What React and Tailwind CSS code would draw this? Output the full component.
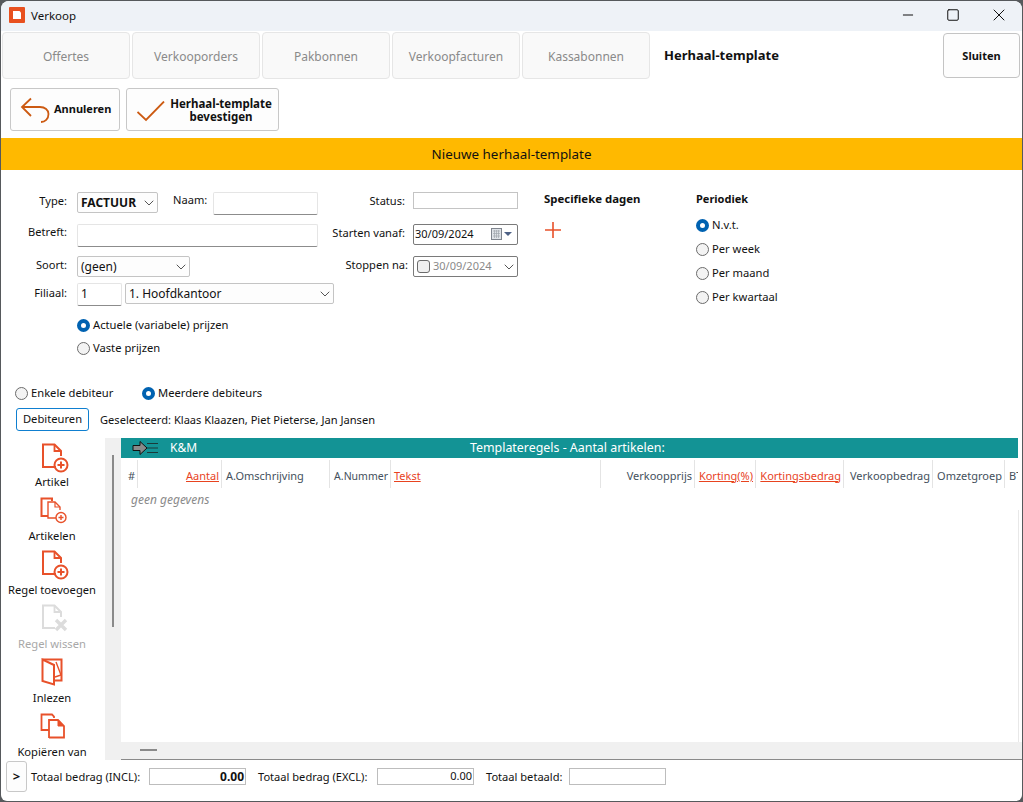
import React from "react";
import { ChevronDown, Minus, Square, X } from "lucide-react";

const font = "font-['Noto_Sans','Open_Sans',sans-serif]";

// Absolute-positioned label, right edge or left edge given through className
const Label = ({ className, children }) => (
  <div className={`absolute text-[11.1px] leading-[16px] text-[#111] whitespace-nowrap ${className}`}>
    {children}
  </div>
);

const Radio = ({ checked, className, children }) => (
  <div className={`absolute flex items-center whitespace-nowrap text-[11.2px] leading-[16px] text-[#111] ${className}`}>
    {checked ? (
      <span className="w-[13px] h-[13px] rounded-full border-[4px] border-[#0062b1] bg-white mr-[3px]" />
    ) : (
      <span className="w-[13px] h-[13px] rounded-full border border-[#6b6b6b] bg-[#f3f3f3] mr-[3px]" />
    )}
    {children}
  </div>
);

const Select = ({ className, children }) => (
  <div className={`absolute flex items-center justify-between pl-[3px] bg-[#fdfdfd] border border-[#c4c4c4] rounded-[2px] text-[12px] text-[#111] ${className}`}>
    <span>{children}</span>
    <ChevronDown size={16} strokeWidth={1.5} className="text-[#555]" />
  </div>
);

const Input = ({ className, children }) => (
  <div className={`absolute bg-white border border-[#e5e5e5] border-b-[#8c8c8c] rounded-[2px] px-[3px] text-[12px] text-[#111] ${className}`}>
    {children}
  </div>
);

const Tab = ({ left, children }) => (
  <div
    className="absolute top-[32px] w-[128px] h-[47px] flex items-center justify-center pt-[2px] bg-[#f9f9f9] border border-[#e6e6e6] rounded-[4px] text-[12px] text-[#8a8a8a]"
    style={{ left }}
  >
    {children}
  </div>
);

const Head = ({ left, width, red, children }) => (
  <div
    className={`absolute top-[460px] h-[28px] flex items-center justify-end pt-[4px] pr-[2px] border-r border-[#e4e4e4] text-[11px] whitespace-nowrap overflow-hidden ${
      red ? "text-[#e8431f] [&>span]:underline" : "text-[#44505c]"
    }`}
    style={{ left, width }}
  >
    <span>{children}</span>
  </div>
);

const DocPlus = ({ className, color = "#e8512a" }) => (
  <svg className={`absolute ${className}`} width="28" height="30" viewBox="0 0 28 30" fill="none" stroke={color}>
    <path d="M15 24H2V1.5H13.5L20 8V13" strokeWidth="2" />
    <path d="M13.5 1.5V8H20" strokeWidth="1.8" />
    <circle cx="20" cy="22" r="6.5" strokeWidth="2" />
    <path d="M20 18.5V25.5M16.5 22H23.5" strokeWidth="2" />
  </svg>
);

const Tool = ({ top, muted, children }) => (
  <div
    className={`absolute left-0 w-[104px] text-center text-[11.2px] leading-[16px] whitespace-nowrap ${muted ? "text-[#a8a8a8]" : "text-[#111]"}`}
    style={{ top }}
  >
    {children}
  </div>
);

export default function App() {
  return (
    <div className={`relative w-[1023px] h-[802px] overflow-hidden bg-[#56595c] ${font}`}>
      <div className="absolute left-[1px] top-[1px] w-[1021px] h-[800px] bg-white rounded-t-[8px] rounded-b-[6px] overflow-hidden">
      </div>
      <div className="absolute left-0 top-0 w-[1023px] h-[802px]">
        {/* Title bar */}
        <div className="absolute left-[1px] top-[1px] w-[1021px] h-[30px] bg-[#eef2f7] rounded-t-[8px]" />
        <svg className="absolute left-[9px] top-[7px]" width="16" height="16" viewBox="0 0 16 16">
          <rect width="16" height="16" rx="1" fill="#e8501f" />
          <path d="M4 4H10.5L12 5.5V12H4Z" fill="#fff" />
        </svg>
        <div className="absolute left-[31px] top-[7px] text-[11.5px] leading-[18px] text-[#111]">Verkoop</div>
        <Minus size={16} strokeWidth={1.5} className="absolute left-[900px] top-[7px] text-[#111]" />
        <Square size={14} strokeWidth={1.7} className="absolute left-[946px] top-[8px] text-[#111]" />
        <X size={20} strokeWidth={1.2} className="absolute left-[989px] top-[5px] text-[#111]" />

        {/* Tabs */}
        <Tab left={2}>Offertes</Tab>
        <Tab left={132}>Verkooporders</Tab>
        <Tab left={262}>Pakbonnen</Tab>
        <Tab left={392}>Verkoopfacturen</Tab>
        <Tab left={522}>Kassabonnen</Tab>
        <div className="absolute left-[664px] top-[46px] text-[13px] leading-[18px] font-bold text-[#111]">Herhaal-template</div>
        <div className="absolute left-[943px] top-[33px] w-[77px] h-[45px] flex items-center justify-center pt-[2px] bg-[#fdfdfd] border border-[#c4c4c4] rounded-[4px] text-[11px] font-bold text-[#111]">
          Sluiten
        </div>

        {/* Action buttons */}
        <div className="absolute left-[10px] top-[88px] w-[110px] h-[43px] bg-[#fdfdfd] border border-[#c8c8c8] rounded-[3px]">
          <svg className="absolute left-[9px] top-[8px]" width="30" height="26" viewBox="0 0 30 26" fill="none" stroke="#cc5a12" strokeWidth="1.8">
            <path d="M11 1.5L2 10L11 19" />
            <path d="M2 10H20C25 10 28.5 13 28.5 17C28.5 22 25 25 21 25" />
          </svg>
          <div className="absolute left-[43px] top-[12px] text-[11px] leading-[16px] font-bold text-[#111]">Annuleren</div>
        </div>
        <div className="absolute left-[126px] top-[88px] w-[153px] h-[43px] bg-[#fdfdfd] border border-[#c8c8c8] rounded-[3px]">
          <svg className="absolute left-[10px] top-[12px]" width="30" height="24" viewBox="0 0 30 24" fill="none" stroke="#cc5a12" strokeWidth="1.8">
            <path d="M0.5 11L9 19L27 0.5" />
          </svg>
          <div className="absolute left-[38px] top-[8px] w-[112px] text-center text-[11.5px] leading-[13px] font-bold text-[#111]">
            Herhaal-template
            <br />
            bevestigen
          </div>
        </div>

        {/* Banner */}
        <div className="absolute left-[1px] top-[138px] w-[1021px] h-[32px] flex items-center justify-center bg-[#ffb900] text-[13.4px] text-[#111]">
          Nieuwe herhaal-template
        </div>

        {/* Form, left */}
        <Label className="right-[956px] top-[193px]">Type:</Label>
        <Select className="left-[77px] top-[192px] w-[81px] h-[21px] font-bold text-[11.5px]">FACTUUR</Select>
        <Label className="left-[173px] top-[192px]">Naam:</Label>
        <Input className="left-[213px] top-[192px] w-[105px] h-[23px]" />
        <Label className="right-[956px] top-[224px]">Betreft:</Label>
        <Input className="left-[77px] top-[224px] w-[241px] h-[23px]" />
        <Label className="right-[956px] top-[257px]">Soort:</Label>
        <Select className="left-[77px] top-[256px] w-[113px] h-[21px]">(geen)</Select>
        <Label className="right-[956px] top-[285px]">Filiaal:</Label>
        <Input className="left-[77px] top-[283px] w-[45px] h-[23px] leading-[20px]">1</Input>
        <Select className="left-[125px] top-[283px] w-[209px] h-[21px]">1. Hoofdkantoor</Select>
        <Radio checked className="left-[77px] top-[317px]">Actuele (variabele) prijzen</Radio>
        <Radio className="left-[77px] top-[340px]">Vaste prijzen</Radio>

        {/* Form, middle */}
        <Label className="right-[618px] top-[193px]">Status:</Label>
        <div className="absolute left-[413px] top-[192px] w-[105px] h-[17px] bg-white border border-[#c4c4c4]" />
        <Label className="right-[618px] top-[225px]">Starten vanaf:</Label>
        <div className="absolute left-[413px] top-[224px] w-[105px] h-[21px] flex items-center bg-white border border-[#7a7a7a] rounded-[2px] pl-[1px] text-[11px] text-[#111]">
          30/09/2024
          <svg className="absolute left-[77px] top-[3px]" width="24" height="13" viewBox="0 0 24 13">
            <rect x="0.5" y="0.5" width="10" height="11" fill="#dfe3e8" stroke="#7f858e" />
            <path d="M2 3H9M2 5.5H9M2 8H9M3.5 2V10M5.5 2V10M7.5 2V10" stroke="#a0a6ae" strokeWidth="0.7" />
            <path d="M13 4H21L17 8Z" fill="#4d6185" />
          </svg>
        </div>
        <Label className="right-[615px] top-[257px]">Stoppen na:</Label>
        <div className="absolute left-[413px] top-[256px] w-[105px] h-[21px] flex items-center bg-white border border-[#7a7a7a] rounded-[2px] text-[11px] text-[#8a8a8a]">
          <span className="ml-[3px] mr-[3px] w-[13px] h-[13px] rounded-[3px] border border-[#6b6b6b] bg-[#f0f0f0]" />
          30/09/2024
          <ChevronDown size={16} strokeWidth={1.5} className="absolute left-[87px] top-[2px] text-[#555]" />
        </div>

        {/* Form, right */}
        <div className="absolute left-[544px] top-[191px] text-[11.4px] leading-[16px] font-bold text-[#111]">Specifieke dagen</div>
        <svg className="absolute left-[545px] top-[222px]" width="16" height="16" viewBox="0 0 16 16" stroke="#e8512a" strokeWidth="1.6">
          <path d="M8 0V16M0 8H16" />
        </svg>
        <div className="absolute left-[696px] top-[191px] text-[11px] leading-[16px] font-bold text-[#111]">Periodiek</div>
        <Radio checked className="left-[696px] top-[217px]">N.v.t.</Radio>
        <Radio className="left-[696px] top-[241px]">Per week</Radio>
        <Radio className="left-[696px] top-[265px]">Per maand</Radio>
        <Radio className="left-[696px] top-[289px]">Per kwartaal</Radio>

        {/* Debiteuren */}
        <Radio className="left-[15px] top-[385px]">Enkele debiteur</Radio>
        <Radio checked className="left-[142px] top-[385px]">Meerdere debiteurs</Radio>
        <div className="absolute left-[16px] top-[408px] w-[73px] h-[23px] flex items-center justify-center bg-white border border-[#0f7fd0] rounded-[3px] text-[11.2px] text-[#111]">
          Debiteuren
        </div>
        <Label className="left-[100px] top-[412px]">Geselecteerd: Klaas Klaazen, Piet Pieterse, Jan Jansen</Label>

        {/* Toolbar */}
        <DocPlus className="left-[41px] top-[443px]" />
        <Tool top={474}>Artikel</Tool>
        <svg className="absolute left-[40px] top-[497px]" width="28" height="28" viewBox="0 0 28 28" fill="none" stroke="#e8512a">
          <path d="M8 19H1.5V1.5H12V4" strokeWidth="2" />
          <path d="M16 21H8V5H15L20 10V13" strokeWidth="1.4" />
          <path d="M15 5V10H20" strokeWidth="1.2" />
          <circle cx="21" cy="20.5" r="5" strokeWidth="1.4" />
          <path d="M21 18V23M18.5 20.5H23.5" strokeWidth="1.4" />
        </svg>
        <Tool top={528}>Artikelen</Tool>
        <DocPlus className="left-[41px] top-[550px]" />
        <Tool top={582}>Regel toevoegen</Tool>
        <svg className="absolute left-[41px] top-[604px]" width="28" height="30" viewBox="0 0 28 30" fill="none" stroke="#dcdcdc">
          <path d="M14 24H2V1.5H13.5L20 8V13" strokeWidth="2" />
          <path d="M13.5 1.5V8H20" strokeWidth="1.8" />
          <path d="M15 16L25 26M25 16L15 26" strokeWidth="3.4" />
        </svg>
        <Tool top={636} muted>Regel wissen</Tool>
        <svg className="absolute left-[41px] top-[658px]" width="24" height="28" viewBox="0 0 24 28" fill="none" stroke="#e8512a">
          <path d="M1.5 1.5H20.5V22.5H14" strokeWidth="2" />
          <path d="M1.5 1.5V23L13 26.5V7L1.5 1.5Z" strokeWidth="2" />
          <path d="M15 4L20 17L14 19" strokeWidth="1.4" />
        </svg>
        <Tool top={690}>Inlezen</Tool>
        <svg className="absolute left-[40px] top-[713px]" width="26" height="26" viewBox="0 0 26 26" fill="none" stroke="#e8512a">
          <path d="M9 17H1.5V1.5H12L14 3.5V5" strokeWidth="1.8" />
          <path d="M9 25V7H18L24 13V24.5H9" strokeWidth="1.8" />
          <path d="M18 7V13H24" fill="#e8512a" strokeWidth="1" />
        </svg>
        <Tool top={744}>Kopiëren van</Tool>

        {/* Grid */}
        <div className="absolute left-[105px] top-[438px] w-[16px] h-[322px] bg-[#f0f0f0]" />
        <div className="absolute left-[112px] top-[455px] w-[2px] h-[172px] bg-[#8a8a8a]" />
        <div className="absolute left-[121px] top-[438px] w-[897px] h-[20px] bg-[#139395]" />
        <svg className="absolute left-[132px] top-[440px]" width="27" height="16" viewBox="0 0 27 16">
          <path d="M1 5.5H8V1.5L15 8L8 14.5V10.5H1Z" fill="#8a8a8a" stroke="#111" strokeWidth="1" />
          <path d="M15 3.5H26M15 8H26M15 12.5H26" stroke="#1a3a3a" strokeWidth="1.2" />
        </svg>
        <div className="absolute left-[170px] top-[439px] text-[12px] leading-[18px] text-white">K&amp;M</div>
        <div className="absolute left-[470px] top-[439px] text-[12.4px] leading-[18px] text-white whitespace-nowrap">Templateregels - Aantal artikelen:</div>

        <Head left={122} width={16}>#</Head>
        <Head left={138} width={84} red>Aantal</Head>
        <div className="absolute left-[226px] top-[468px] text-[11px] leading-[16px] text-[#44505c]">A.Omschrijving</div>
        <div className="absolute left-[329px] top-[460px] h-[28px] w-[1px] bg-[#e4e4e4]" />
        <Head left={331} width={60}>
          <span className="text-[10.5px]">A.Nummer</span>
        </Head>
        <div className="absolute left-[394px] top-[468px] text-[11px] leading-[16px] text-[#e8431f] underline">Tekst</div>
        <div className="absolute left-[600px] top-[460px] h-[28px] w-[1px] bg-[#e4e4e4]" />
        <Head left={602} width={93}>Verkoopprijs</Head>
        <Head left={695} width={61} red>Korting(%)</Head>
        <Head left={756} width={88} red>Kortingsbedrag</Head>
        <Head left={844} width={89}>Verkoopbedrag</Head>
        <Head left={933} width={72}>Omzetgroep</Head>
        <div className="absolute left-[1009px] top-[468px] w-[9px] overflow-hidden text-[11px] leading-[16px] text-[#44505c]">BTW</div>
        <div className="absolute left-[131px] top-[492px] text-[12px] leading-[16px] italic text-[#8a8a8a]">geen gegevens</div>
        <div className="absolute left-[1018px] top-[510px] w-[1px] h-[232px] bg-[#e8e8e8]" />

        <div className="absolute left-[121px] top-[742px] w-[901px] h-[17px] bg-[#f0f0f0]" />
        <div className="absolute left-[121px] top-[759px] w-[901px] h-[1px] bg-[#8a8a8a]" />
        <div className="absolute left-[140px] top-[749px] w-[17px] h-[2px] bg-[#8a8a8a]" />

        {/* Footer */}
        <div className="absolute left-[6px] top-[761px] w-[21px] h-[31px] flex items-center justify-center bg-[#fdfdfd] border border-[#c8c8c8] rounded-[3px] text-[13px] font-bold text-[#111]">
          &gt;
        </div>
        <Label className="left-[31px] top-[769px]">Totaal bedrag (INCL):</Label>
        <div className="absolute left-[149px] top-[768px] w-[97px] h-[17px] flex items-center justify-end pr-[1px] bg-white border border-[#bdbdbd] text-[12px] font-bold text-[#111]">0.00</div>
        <Label className="left-[258px] top-[769px]">Totaal bedrag (EXCL):</Label>
        <div className="absolute left-[377px] top-[768px] w-[97px] h-[17px] flex items-center justify-end pr-[1px] bg-white border border-[#bdbdbd] text-[11px] text-[#111]">0.00</div>
        <Label className="left-[486px] top-[769px]">Totaal betaald:</Label>
        <div className="absolute left-[569px] top-[768px] w-[97px] h-[17px] bg-white border border-[#bdbdbd]" />
      </div>
    </div>
  );
}
